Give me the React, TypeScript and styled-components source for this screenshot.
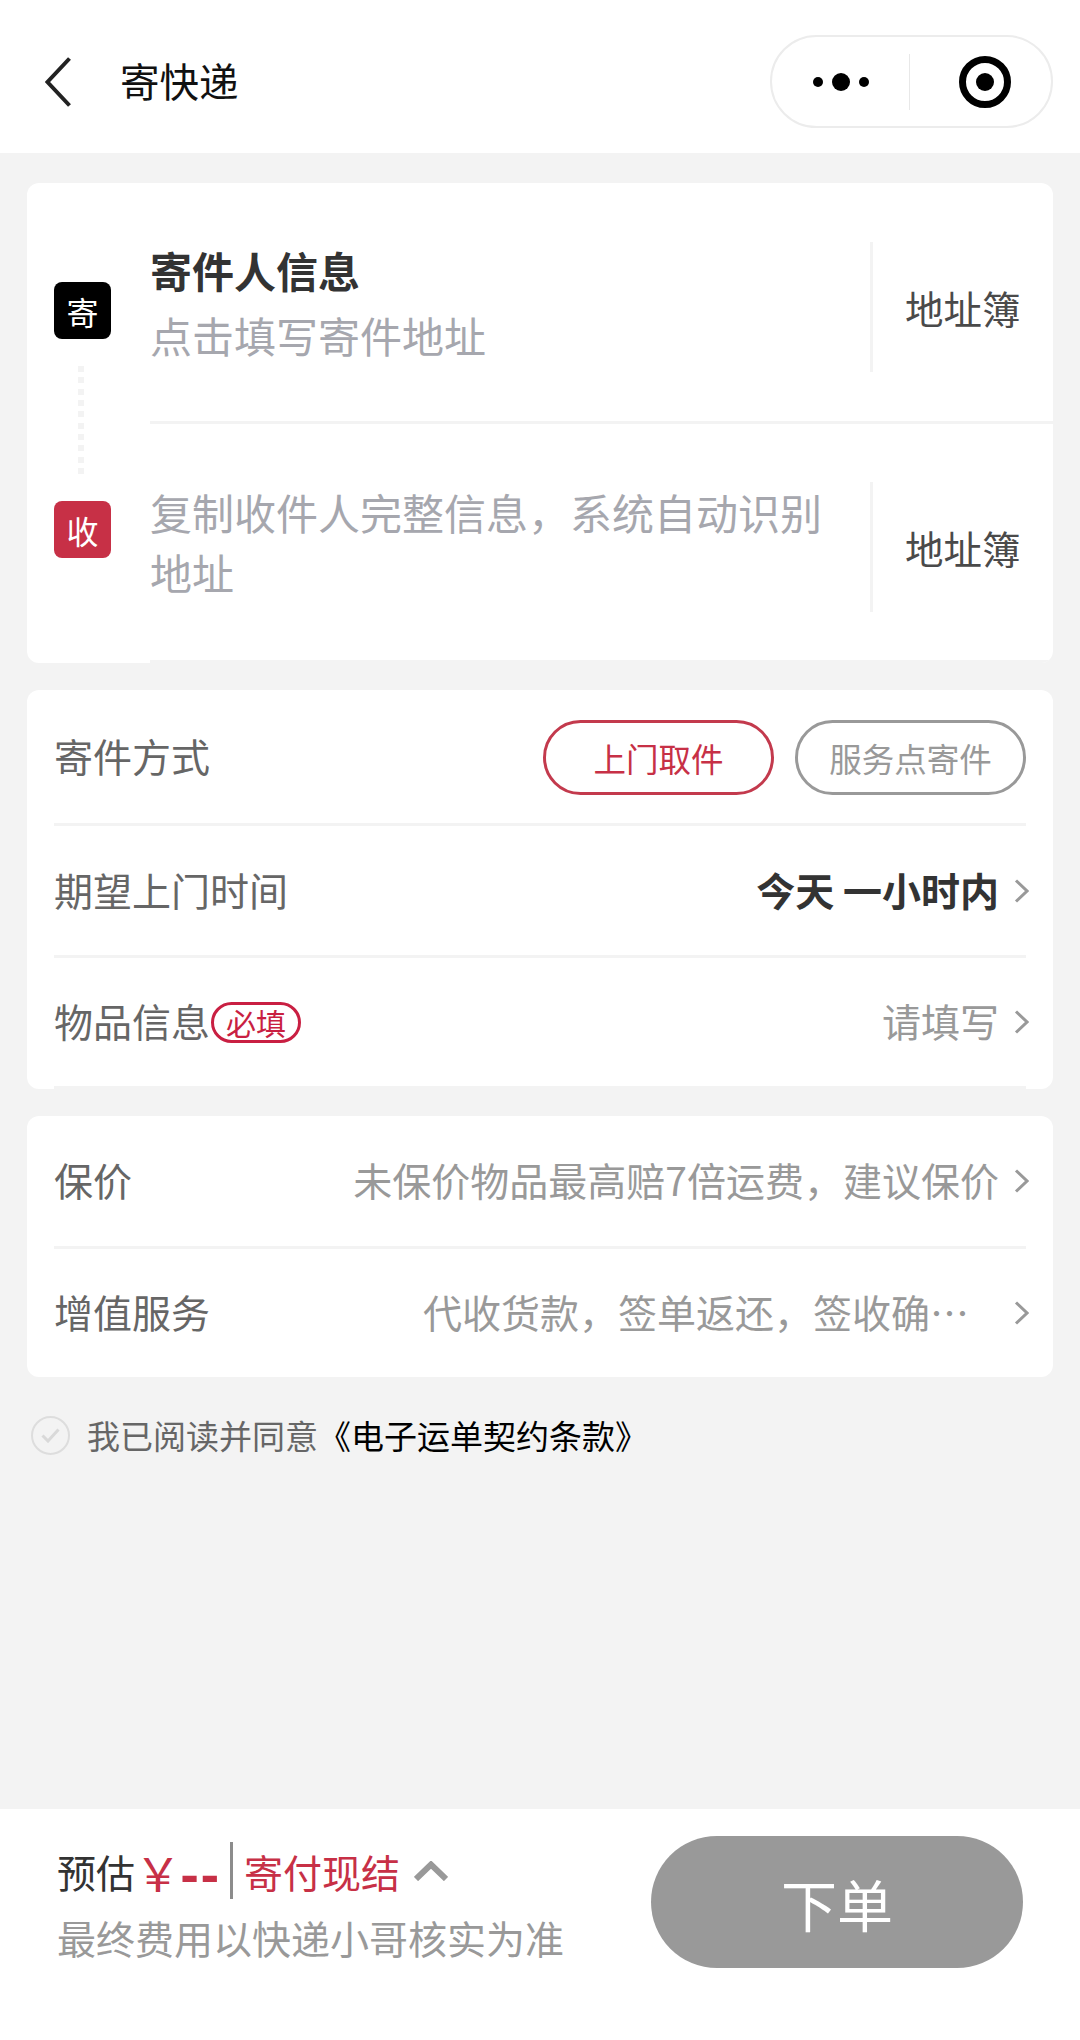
import React, { FC } from "react";
import styled, { createGlobalStyle } from "styled-components";

const COLORS = {
  bg: "#f3f3f3",
  white: "#ffffff",
  red: "#c73046",
  tagRed: "#c91f42",
  grey: "#999999",
  label: "#666666",
  dark: "#333333",
  hint: "#a6a7ae",
};

const GlobalStyle = createGlobalStyle`
  html, body {
    margin: 0;
    padding: 0;
    background: ${COLORS.bg};
  }
  body {
    font-family: "Noto Sans CJK SC", "Noto Sans", sans-serif;
  }
  * {
    box-sizing: border-box;
  }
`;

const Chevron: FC = () => (
  <ChevronIcon viewBox="0 0 15 24" fill="none">
    <path d="M2 1.5 L13 12 L2 22.5" stroke={COLORS.grey} strokeWidth="3" />
  </ChevronIcon>
);

const App: FC = () => {
  return (
    <Page>
      <GlobalStyle />
      <NavBar>
        <BackIcon viewBox="0 0 26 50" fill="none">
          <path d="M24.5 1.5 L2.5 25 L24.5 48.5" stroke="#222222" strokeWidth="4" />
        </BackIcon>
        <NavTitle>寄快递</NavTitle>
        <Capsule>
          <MenuHalf>
            <svg width="56" height="18" viewBox="0 0 56 18" fill="#000000">
              <circle cx="5" cy="9" r="5" />
              <circle cx="28" cy="9" r="9" />
              <circle cx="51" cy="9" r="5" />
            </svg>
          </MenuHalf>
          <CloseHalf>
            <svg width="52" height="52" viewBox="0 0 52 52" fill="none">
              <circle cx="26" cy="26" r="22.5" stroke="#000000" strokeWidth="7" />
              <circle cx="26" cy="26" r="9" fill="#000000" />
            </svg>
          </CloseHalf>
        </Capsule>
      </NavBar>

      <Main>
        <AddressCard>
          <Rail>
            <Badge>寄</Badge>
            <RailDots />
            <Badge $red>收</Badge>
          </Rail>
          <AddressList>
            <AddressRow $height={241}>
              <AddressText>
                <AddressTitle>寄件人信息</AddressTitle>
                <AddressHint>点击填写寄件地址</AddressHint>
              </AddressText>
              <BookLink>地址簿</BookLink>
            </AddressRow>
            <AddressRow $height={239}>
              <AddressText>
                <AddressHint>复制收件人完整信息，系统自动识别地址</AddressHint>
              </AddressText>
              <BookLink>地址簿</BookLink>
            </AddressRow>
          </AddressList>
        </AddressCard>

        <Card>
          <Row $height={136} $divider>
            <RowLabel>寄件方式</RowLabel>
            <PillGroup>
              <Pill $active>上门取件</Pill>
              <Pill>服务点寄件</Pill>
            </PillGroup>
          </Row>
          <Row $height={132} $divider>
            <RowLabel>期望上门时间</RowLabel>
            <RowValue $strong>今天 一小时内</RowValue>
            <Chevron />
          </Row>
          <Row $height={131} $divider>
            <RowLabel>物品信息</RowLabel>
            <RequiredTag>必填</RequiredTag>
            <RowValue>请填写</RowValue>
            <Chevron />
          </Row>
        </Card>

        <Card>
          <Row $height={133} $divider>
            <RowLabel>保价</RowLabel>
            <RowValue>未保价物品最高赔7倍运费，建议保价</RowValue>
            <Chevron />
          </Row>
          <Row $height={128}>
            <RowLabel>增值服务</RowLabel>
            <ClippedValue>代收货款，签单返还，签收确…</ClippedValue>
            <Chevron />
          </Row>
        </Card>

        <Agreement>
          <CheckCircle>
            <svg width="19" height="15" viewBox="0 0 19 15" fill="none">
              <path d="M1.5 7.5 L7 13 L17.5 1.5" stroke="#d9d9d9" strokeWidth="3" />
            </svg>
          </CheckCircle>
          <AgreementText>
            我已阅读并同意<AgreementLink>《电子运单契约条款》</AgreementLink>
          </AgreementText>
        </Agreement>
      </Main>

      <Footer>
        <PriceBlock>
          <PriceLine>
            <PriceLabel>预估</PriceLabel>
            <PriceSymbol>￥</PriceSymbol>
            <PriceDash>--</PriceDash>
            <PriceDivider />
            <PriceRed>寄付现结</PriceRed>
            <CaretIcon viewBox="0 0 34 20" fill="none">
              <path d="M2 18 L17 3.5 L32 18" stroke={COLORS.grey} strokeWidth="6" />
            </CaretIcon>
          </PriceLine>
          <PriceNote>最终费用以快递小哥核实为准</PriceNote>
        </PriceBlock>
        <SubmitButton>下单</SubmitButton>
      </Footer>
    </Page>
  );
};

const Page = styled.div`
  width: 1080px;
  height: 2040px;
  display: flex;
  flex-direction: column;
  background-color: ${COLORS.bg};
  overflow: hidden;
`;

const NavBar = styled.div`
  height: 153px;
  flex-shrink: 0;
  padding: 10px 27px 0 45px;
  display: flex;
  align-items: center;
  background-color: ${COLORS.white};
`;

const BackIcon = styled.svg`
  width: 26px;
  height: 50px;
  flex-shrink: 0;
`;

const NavTitle = styled.div`
  margin-left: 49px;
  padding-bottom: 3px;
  flex: 1;
  font-size: 39.5px;
  line-height: 50px;
  color: #111111;
`;

const Capsule = styled.div`
  width: 283px;
  height: 93px;
  display: flex;
  align-items: center;
  border: 2px solid #ececec;
  border-radius: 47px;
`;

const MenuHalf = styled.div`
  width: 137px;
  height: 56px;
  flex-shrink: 0;
  display: flex;
  align-items: center;
  justify-content: center;
`;

const CloseHalf = styled.div`
  flex: 1;
  height: 56px;
  padding-left: 8px;
  display: flex;
  align-items: center;
  justify-content: center;
  border-left: 1px solid #e8e8e8;
`;

const Main = styled.div`
  flex: 1;
  padding: 30px 27px 0 27px;
  display: flex;
  flex-direction: column;
  gap: 27px;
`;

const AddressCard = styled.div`
  display: flex;
  height: 480px;
  background-color: ${COLORS.white};
  border-radius: 12px;
  overflow: hidden;
`;

const Rail = styled.div`
  width: 123px;
  flex-shrink: 0;
  padding: 99px 0 0 27px;
  display: flex;
  flex-direction: column;
`;

const Badge = styled.div<{ $red?: boolean }>`
  width: 57px;
  height: 57px;
  display: flex;
  align-items: center;
  justify-content: center;
  border-radius: 8px;
  font-size: 32px;
  color: ${COLORS.white};
  background-color: ${({ $red }) => ($red ? COLORS.red : "#000000")};
`;

const RailDots = styled.div`
  width: 6px;
  height: 108px;
  margin: 27px 0 27px 24px;
  background: repeating-linear-gradient(
    to bottom,
    ${COLORS.bg} 0,
    ${COLORS.bg} 6px,
    transparent 6px,
    transparent 11.33px
  );
`;

const AddressList = styled.div`
  flex: 1;
  display: flex;
  flex-direction: column;
`;

const AddressRow = styled.div<{ $height: number }>`
  height: ${({ $height }) => $height}px;
  padding-top: 10px;
  display: flex;
  align-items: center;
  border-bottom: 3px solid ${COLORS.bg};
`;

const AddressText = styled.div`
  width: 681px;
  padding-bottom: 10px;
  flex-shrink: 0;
`;

const AddressTitle = styled.div`
  margin-bottom: 5px;
  font-size: 42px;
  line-height: 60px;
  font-weight: 700;
  color: ${COLORS.dark};
`;

const AddressHint = styled.div`
  font-size: 42px;
  line-height: 60px;
  color: ${COLORS.hint};
`;

const BookLink = styled.div`
  margin-left: 39px;
  height: 130px;
  flex: 1;
  padding-left: 32px;
  display: flex;
  align-items: center;
  font-size: 38.5px;
  color: #4a4a4a;
  border-left: 3px solid ${COLORS.bg};
`;

const Card = styled.div`
  padding: 0 27px;
  background-color: ${COLORS.white};
  border-radius: 12px;
  overflow: hidden;
`;

const Row = styled.div<{ $height: number; $divider?: boolean }>`
  height: ${({ $height }) => $height}px;
  display: flex;
  align-items: center;
  border-bottom: ${({ $divider }) => ($divider ? `3px solid ${COLORS.bg}` : "none")};
`;

const RowLabel = styled.div`
  padding-bottom: 4px;
  font-size: 39px;
  color: ${COLORS.label};
  white-space: nowrap;
`;

const RowValue = styled.div<{ $strong?: boolean }>`
  flex: 1;
  padding-bottom: 4px;
  text-align: right;
  font-size: 39px;
  font-weight: ${({ $strong }) => ($strong ? 700 : 400)};
  color: ${({ $strong }) => ($strong ? COLORS.dark : COLORS.grey)};
  white-space: nowrap;
`;

const ClippedValue = styled.div`
  width: 576px;
  margin-left: auto;
  padding-bottom: 4px;
  font-size: 39px;
  color: ${COLORS.grey};
  white-space: nowrap;
`;

const ChevronIcon = styled.svg`
  width: 15px;
  height: 24px;
  margin: 0 -3px 0 15px;
  flex-shrink: 0;
`;

const PillGroup = styled.div`
  margin-left: auto;
  padding-top: 2px;
  display: flex;
  gap: 21px;
`;

const Pill = styled.div<{ $active?: boolean }>`
  width: 231px;
  height: 75px;
  display: flex;
  align-items: center;
  justify-content: center;
  border-radius: 38px;
  font-size: 32.5px;
  color: ${({ $active }) => ($active ? COLORS.red : COLORS.grey)};
  border: 3px solid ${({ $active }) => ($active ? "#c33a4d" : COLORS.grey)};
`;

const RequiredTag = styled.div`
  width: 90px;
  height: 41px;
  margin-left: 1px;
  display: flex;
  align-items: center;
  justify-content: center;
  border-radius: 21px;
  font-size: 30px;
  color: ${COLORS.tagRed};
  border: 3px solid ${COLORS.tagRed};
`;

const Agreement = styled.div`
  margin-top: 8px;
  padding-left: 4px;
  display: flex;
  align-items: center;
  gap: 17px;
`;

const CheckCircle = styled.div`
  width: 39px;
  height: 39px;
  display: flex;
  align-items: center;
  justify-content: center;
  border: 2px solid #dddddd;
  border-radius: 50%;
`;

const AgreementText = styled.div`
  font-size: 33px;
  line-height: 46px;
  color: ${COLORS.label};
  white-space: nowrap;
`;

const AgreementLink = styled.span`
  color: #000000;
`;

const Footer = styled.div`
  height: 231px;
  flex-shrink: 0;
  padding: 27px 57px 0 57px;
  display: flex;
  justify-content: space-between;
  background-color: ${COLORS.white};
`;

const PriceBlock = styled.div`
  padding-top: 6px;
`;

const PriceLine = styled.div`
  height: 57px;
  display: flex;
  align-items: center;
  font-size: 39px;
`;

const PriceLabel = styled.span`
  color: ${COLORS.dark};
`;

const PriceRed = styled.span`
  color: ${COLORS.red};
`;

const PriceSymbol = styled.span`
  font-size: 46px;
  color: ${COLORS.red};
`;

const PriceDash = styled.span`
  width: 50px;
  margin-left: -1px;
  flex-shrink: 0;
  font-size: 50px;
  font-weight: 900;
  letter-spacing: 1px;
  color: ${COLORS.red};
`;

const PriceDivider = styled.span`
  width: 3px;
  height: 57px;
  margin-right: 11px;
  background-color: #8c8c8c;
`;

const CaretIcon = styled.svg`
  width: 34px;
  height: 20px;
  margin-left: 14px;
`;

const PriceNote = styled.div`
  margin-top: 8px;
  font-size: 39px;
  line-height: 60px;
  color: ${COLORS.grey};
  white-space: nowrap;
`;

const SubmitButton = styled.div`
  width: 372px;
  height: 132px;
  display: flex;
  align-items: center;
  justify-content: center;
  border-radius: 66px;
  font-size: 56px;
  color: ${COLORS.white};
  background-color: ${COLORS.grey};
`;

export default App;
